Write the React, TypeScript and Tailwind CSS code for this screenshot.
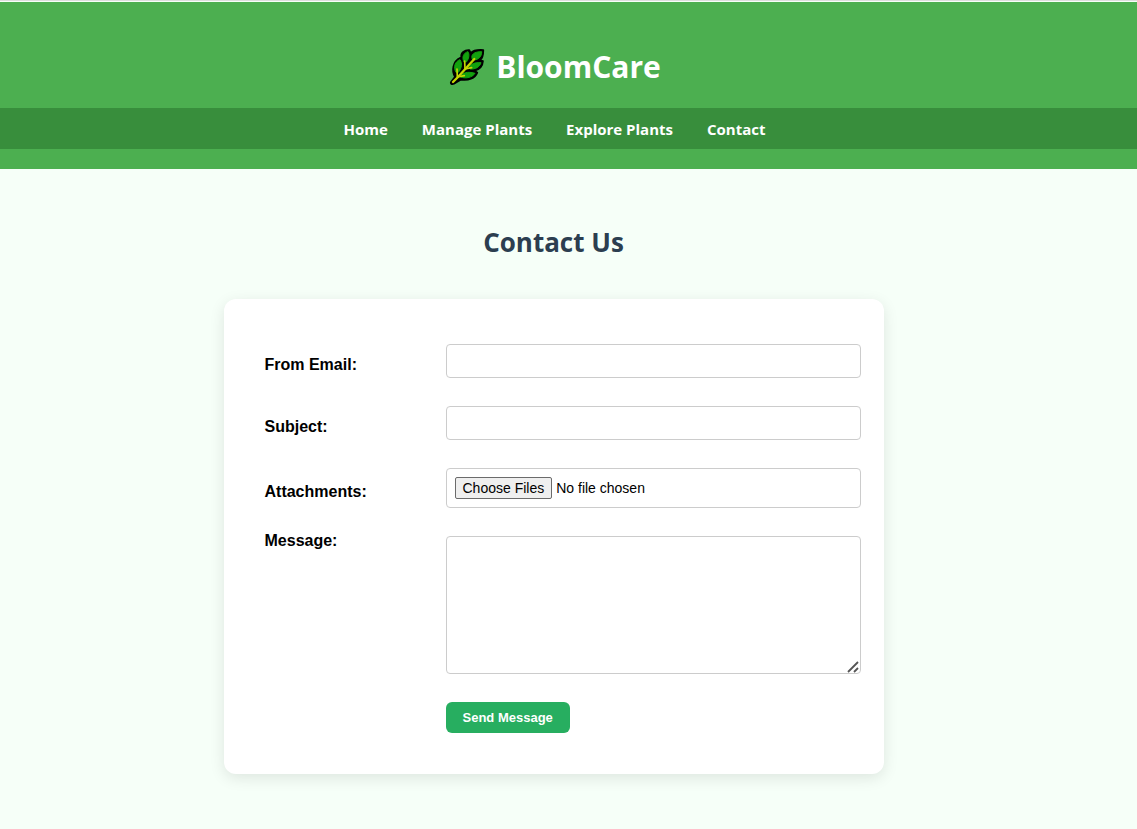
import type { ReactNode } from 'react';

const links = ['Home', 'Manage Plants', 'Explore Plants', 'Contact'];

const fieldClass =
  'block w-full rounded border border-[#cccccc] bg-white px-2 text-sm text-black';

function LeafIcon() {
  return (
    <svg viewBox="0 0 114 120" className="h-10 w-[38px]" aria-hidden="true">
      <path
        d="M9 105L21 89C10 73 14 42 37 32L40 31C37 18 50 8 64 9L68 18C77 8 90 8 106 9C106 24 103 35 96 40L105 42C104 57 97 67 80 71L88 77C81 94 61 102 38 98L18 110C12 114 6 110 9 105Z"
        fill="#000"
        stroke="#000"
        strokeWidth="5"
        strokeLinejoin="round"
      />
      <g fill="#13a10e" stroke="#13a10e" strokeWidth="3" strokeLinejoin="round">
        <path d="M48 45C41 31 46 18 60 14C65 23 63 35 55 45Z" />
        <path d="M73 37C67 22 79 14 101 14C101 28 93 38 77 39Z" />
        <path d="M24 76C15 61 21 43 36 38C43 49 42 62 31 76Z" />
        <path d="M64 61C69 50 81 46 99 47C95 60 83 67 66 66Z" />
        <path d="M40 84C49 75 65 74 81 79C73 91 55 96 37 90Z" />
      </g>
      <g fill="none" stroke="#c5d600" strokeLinecap="round" strokeLinejoin="round">
        <path d="M15 105L30 90L79 36" strokeWidth="7" />
        <path d="M27 66L28 90L49 86M50 42L51 66L71 62" strokeWidth="5" />
      </g>
    </svg>
  );
}

function Row({ id, label, labelClass, children }: { id: string; label: string; labelClass: string; children: ReactNode }) {
  return (
    <div className="grid grid-cols-[181px_1fr]">
      <label htmlFor={id} className={`text-base font-bold leading-5 text-black ${labelClass}`}>
        {label}
      </label>
      {children}
    </div>
  );
}

export default function App() {
  return (
    <div className="min-h-screen border-t border-[#dddddd] bg-[#f6fff8] font-['Liberation_Sans',Arial,sans-serif]">
      <header className="mt-px bg-[#4caf50] pb-5 font-['Open_Sans','Noto_Sans',sans-serif] font-bold text-white">
        <div className="flex h-[106px] items-end justify-center gap-[10px] pb-[21px] pr-7">
          <LeafIcon />
          <h1 className="text-3xl leading-10">BloomCare</h1>
        </div>
        <nav className="flex justify-center gap-[34px] bg-[#388e3c] pb-[7px] pr-7 pt-[9px] text-[15px] leading-[25px]">
          {links.map((link) => (
            <a key={link} href="#">{link}</a>
          ))}
        </nav>
      </header>
      <main className="pb-14 pl-4 pr-[46px] pt-[53px]">
        <h2 className="text-center font-['Open_Sans','Noto_Sans',sans-serif] text-[26px] font-bold leading-10 text-[#2c3e50]">
          Contact Us
        </h2>
        <form
          className="mx-auto mt-[37px] flex w-full max-w-[660px] flex-col gap-7 rounded-xl bg-white pb-[41px] pl-[41px] pr-[23px] pt-[45px] shadow-[0_4px_15px_rgba(0,0,0,0.1)]"
          onSubmit={(event) => event.preventDefault()}
        >
          <Row id="email" label="From Email:" labelClass="pt-[11px]">
            <input id="email" type="email" className={`${fieldClass} h-[34px]`} />
          </Row>
          <Row id="subject" label="Subject:" labelClass="pt-[11px]">
            <input id="subject" type="text" className={`${fieldClass} h-[34px]`} />
          </Row>
          <Row id="files" label="Attachments:" labelClass="pt-[14px]">
            <input
              id="files"
              type="file"
              multiple
              className={`${fieldClass} h-10 py-2 file:mr-1 file:h-[22px] file:rounded-[2px] file:border file:border-solid file:border-[#6b6b6b] file:bg-[#efefef] file:px-[7px] file:text-sm file:leading-5 file:text-black`}
            />
          </Row>
          <Row id="message" label="Message:" labelClass="-mt-[5px]">
            <div className="relative">
              <textarea
                id="message"
                className={`${fieldClass} h-[138px] resize-y py-2 [&::-webkit-resizer]:bg-transparent`}
              />
              <svg
                viewBox="0 0 12 12"
                className="pointer-events-none absolute bottom-px right-[2px] size-3"
                fill="none"
                stroke="#555"
                strokeWidth="1.8"
                aria-hidden="true"
              >
                <path d="M1 11L11 1M7 11L11 7" />
              </svg>
            </div>
          </Row>
          <div className="pl-[181px]">
            <button type="submit" className="block h-[31px] rounded-md bg-[#27ae60] px-[17px] text-[13px] font-bold text-white">
              Send Message
            </button>
          </div>
        </form>
      </main>
    </div>
  );
}
